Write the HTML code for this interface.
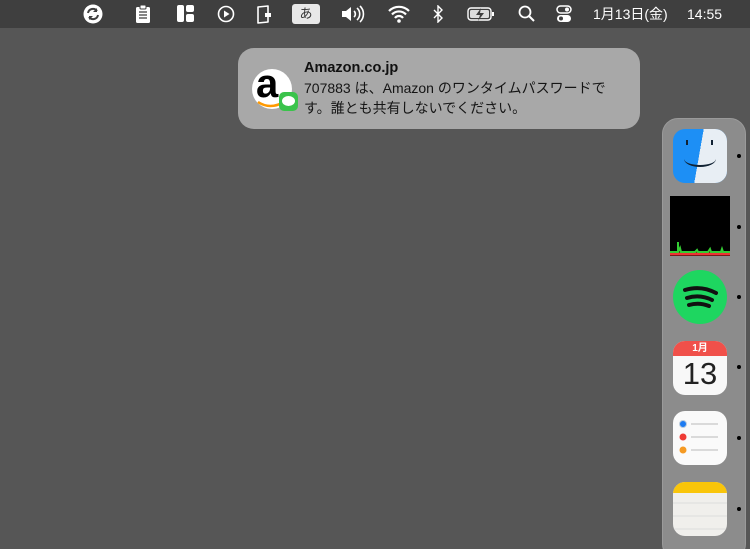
<!DOCTYPE html>
<html><head><meta charset="utf-8"><style>
html,body{margin:0;width:750px;height:549px;overflow:hidden}
body{background:#565656;position:relative;font-family:"Liberation Sans","Noto Sans CJK JP",sans-serif}
.mb{position:absolute;left:0;top:0;width:750px;height:28px;background:#3f3f3f;color:#fff}
.mb .t{position:absolute;top:4px;font-size:14px;line-height:20px}
.ic{position:absolute;top:5px}
.notif{position:absolute;left:238px;top:48px;width:402px;height:81px;background:#a8a8a8;border-radius:16px}
.notif .h{position:absolute;left:66px;top:12px;font-size:14.5px;font-weight:bold;color:#111}
.notif .b{position:absolute;left:66px;top:30px;font-size:14px;line-height:20px;color:#151515;width:312px}
.dock{position:absolute;left:662px;top:118px;width:82px;height:440px;background:#8c8c8c;border-radius:16px;border:1px solid #9a9a9a}
.app{position:absolute;left:673px;width:54px;height:54px;border-radius:12px}
.dot{position:absolute;left:737px;width:4px;height:4px;border-radius:50%;background:#000}
</style></head><body>
<div class="mb">
<svg class="ic" style="left:82px;top:4px" width="22" height="20"><circle cx="11" cy="10" r="9.5" fill="#fff"/><path d="M6 9a5 5 0 0 1 9-2M16 11a5 5 0 0 1-9 2" stroke="#3f3f3f" stroke-width="2" fill="none"/><path d="M15 4v4h-4M7 16v-4h4" fill="#3f3f3f"/></svg>
<svg class="ic" style="left:135px" width="16" height="18"><rect x="1" y="2" width="14" height="16" rx="1.5" fill="#fff"/><rect x="5" y="0" width="6" height="4" rx="1" fill="#fff" stroke="#3f3f3f"/><path d="M4 7h8M4 10h8M4 13h8" stroke="#3f3f3f" stroke-width="1.3"/></svg>
<svg class="ic" style="left:177px" width="17" height="17"><rect x="0" y="0" width="7" height="17" rx="2" fill="#fff"/><rect x="9" y="0" width="8" height="7" rx="2" fill="#fff"/><rect x="9" y="9" width="8" height="8" rx="2" fill="#fff"/></svg>
<svg class="ic" style="left:217px" width="18" height="18"><circle cx="9" cy="9" r="7.5" stroke="#fff" stroke-width="1.6" fill="none"/><path d="M7 5.5v7l5.5-3.5z" fill="#fff"/></svg>
<svg class="ic" style="left:256px" width="16" height="19"><path d="M2 2l10-1v16l-10 1z" stroke="#fff" stroke-width="1.6" fill="none" stroke-linejoin="round"/><rect x="9" y="8" width="6" height="4" fill="#fff"/></svg>
<div style="position:absolute;left:292px;top:4px;width:28px;height:20px;background:#e8e8e8;border-radius:3px;color:#333;font-size:13px;text-align:center;line-height:20px">あ</div>
<svg class="ic" style="left:341px" width="26" height="18"><path d="M1 6h4l5-4v14l-5-4H1z" fill="#fff"/><path d="M13 6a4 4 0 0 1 0 6M16 3a8 8 0 0 1 0 12M19 1a11 11 0 0 1 0 16" stroke="#fff" stroke-width="1.6" fill="none"/></svg>
<svg class="ic" style="left:388px" width="22" height="18"><path d="M1 6a14 14 0 0 1 20 0M4 9.5a9.5 9.5 0 0 1 14 0M7 13a5 5 0 0 1 8 0" stroke="#fff" stroke-width="2.2" fill="none"/><circle cx="11" cy="16" r="1.8" fill="#fff"/></svg>
<svg class="ic" style="left:432px" width="12" height="18"><path d="M2 5l8 8-4 4V1l4 4-8 8" stroke="#fff" stroke-width="1.4" fill="none"/></svg>
<svg class="ic" style="left:467px;top:7px" width="28" height="14"><rect x="1" y="1" width="23" height="12" rx="3" stroke="#fff" stroke-width="1.4" fill="none"/><rect x="3" y="3" width="19" height="8" rx="1.5" fill="#ddd"/><rect x="25" y="5" width="2" height="4" fill="#fff"/><path d="M14 1l-5 7h4l-2 6 6-8h-4z" fill="#3f3f3f"/></svg>
<svg class="ic" style="left:518px" width="17" height="18"><circle cx="7" cy="7" r="5.5" stroke="#fff" stroke-width="1.8" fill="none"/><path d="M11 11l5 5" stroke="#fff" stroke-width="2"/></svg>
<svg class="ic" style="left:556px" width="16" height="18"><rect x="1" y="1" width="14" height="7" rx="3.5" stroke="#fff" stroke-width="1.5" fill="none"/><circle cx="11" cy="4.5" r="2" fill="#fff"/><rect x="1" y="10" width="14" height="7" rx="3.5" fill="#fff"/><circle cx="5" cy="13.5" r="2" fill="#3f3f3f"/></svg>
<div class="t" style="left:593px">1月13日(金)</div>
<div class="t" style="left:687px">14:55</div>
</div>

<div class="notif">
<div style="position:absolute;left:14px;top:21px;width:40px;height:40px;border-radius:50%;background:#fff"></div>
<div style="position:absolute;left:18px;top:14px;font-size:40px;font-weight:bold;color:#000;line-height:44px">a</div>
<svg style="position:absolute;left:18px;top:52px" width="30" height="10"><path d="M2 2q12 8 26 0" stroke="#f90" stroke-width="2.5" fill="none"/></svg>
<div style="position:absolute;left:41px;top:44px;width:19px;height:19px;border-radius:5px;background:#3ac34b"><div style="position:absolute;left:3px;top:4px;width:13px;height:10px;border-radius:50%;background:#fff"></div></div>
<div class="h">Amazon.co.jp</div>
<div class="b">707883 は、Amazon のワンタイムパスワードで<br>す。誰とも共有しないでください。</div>
</div>

<div class="dock"></div>
<div class="app" style="top:129px;overflow:hidden;background:#1d8ff5">
<div style="position:absolute;left:27px;top:0;width:27px;height:54px;background:#e8eef4"></div>
<div style="position:absolute;left:20px;top:0;width:12px;height:54px;background:linear-gradient(100deg,#1d8ff5 50%,#e8eef4 50%)"></div>
<div style="position:absolute;left:13px;top:11px;width:2px;height:5px;background:#123"></div>
<div style="position:absolute;left:38px;top:11px;width:2px;height:5px;background:#123"></div>
<div style="position:absolute;left:11px;top:22px;width:32px;height:14px;border-bottom:2px solid #123;border-radius:0 0 50% 50%"></div>
</div>
<div class="dot" style="top:154px"></div>
<div style="position:absolute;left:670px;top:196px;width:60px;height:60px;background:#000"><svg width="60" height="60"><path d="M0 58h60" stroke="#e33" stroke-width="3"/><path d="M0 56h8l2-4 1 4h14l2-2 1 2h10l2-3 1 3h10l1-3 1 3h8" stroke="#3c3" stroke-width="2" fill="none"/><path d="M8 56v-10" stroke="#3c3" stroke-width="2"/></svg></div>
<div class="dot" style="top:225px"></div>
<div class="app" style="top:270px;border-radius:50%;background:#1ed660"><svg width="54" height="54"><path d="M12 20q16-5 31 3M14 28q13-4 25 2M16 35q10-3 20 1" stroke="#111" stroke-width="4" fill="none" stroke-linecap="round"/></svg></div>
<div class="dot" style="top:295px"></div>
<div class="app" style="top:341px;background:#f8f8f8;overflow:hidden"><div style="height:15px;background:#f0504a;color:#fff;font-size:10px;font-weight:bold;text-align:center;line-height:16px">1月</div><div style="text-align:center;font-size:31px;color:#222;line-height:36px">13</div></div>
<div class="dot" style="top:365px"></div>
<div class="app" style="top:411px;background:#fafafa"><svg width="54" height="54"><circle cx="10" cy="13" r="3.5" fill="#1e7cf2" stroke="#bcd" /><circle cx="10" cy="26" r="3.5" fill="#ef3b35"/><circle cx="10" cy="39" r="3.5" fill="#f59a23"/><path d="M18 13h27M18 26h27M18 39h27" stroke="#bbb"/></svg></div>
<div class="dot" style="top:436px"></div>
<div class="app" style="top:482px;background:#f0efec;overflow:hidden"><div style="height:11px;background:#f9c50a"></div><svg width="54" height="43"><path d="M0 10h54M0 23h54M0 36h54" stroke="#ddd"/></svg></div>
<div class="dot" style="top:507px"></div>
</body></html>
